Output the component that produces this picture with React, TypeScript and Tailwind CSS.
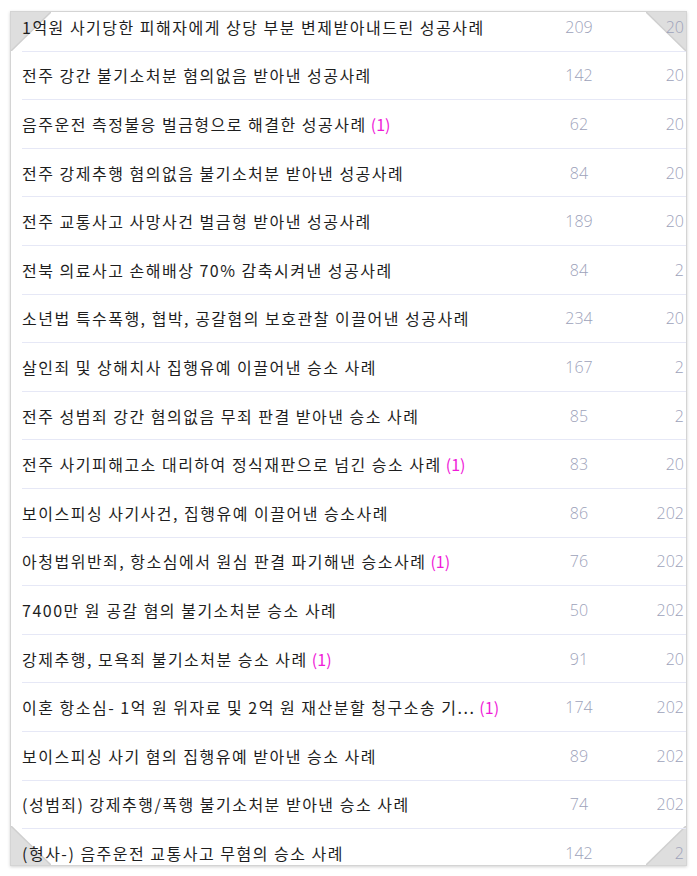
import { FC } from 'react';

interface Row {
  title: string;
  comments?: number;
  views: number;
  date: string;
}

const rows: Row[] = [
  { title: '1억원 사기당한 피해자에게 상당 부분 변제받아내드린 성공사례', views: 209, date: '20' },
  { title: '전주 강간 불기소처분 혐의없음 받아낸 성공사례', views: 142, date: '20' },
  { title: '음주운전 측정불응 벌금형으로 해결한 성공사례', comments: 1, views: 62, date: '20' },
  { title: '전주 강제추행 혐의없음 불기소처분 받아낸 성공사례', views: 84, date: '20' },
  { title: '전주 교통사고 사망사건 벌금형 받아낸 성공사례', views: 189, date: '20' },
  { title: '전북 의료사고 손해배상 70% 감축시켜낸 성공사례', views: 84, date: '2' },
  { title: '소년법 특수폭행, 협박, 공갈혐의 보호관찰 이끌어낸 성공사례', views: 234, date: '20' },
  { title: '살인죄 및 상해치사 집행유예 이끌어낸 승소 사례', views: 167, date: '2' },
  { title: '전주 성범죄 강간 혐의없음 무죄 판결 받아낸 승소 사례', views: 85, date: '2' },
  { title: '전주 사기피해고소 대리하여 정식재판으로 넘긴 승소 사례', comments: 1, views: 83, date: '20' },
  { title: '보이스피싱 사기사건, 집행유예 이끌어낸 승소사례', views: 86, date: '202' },
  { title: '아청법위반죄, 항소심에서 원심 판결 파기해낸 승소사례', comments: 1, views: 76, date: '202' },
  { title: '7400만 원 공갈 혐의 불기소처분 승소 사례', views: 50, date: '202' },
  { title: '강제추행, 모욕죄 불기소처분 승소 사례', comments: 1, views: 91, date: '20' },
  { title: '이혼 항소심- 1억 원 위자료 및 2억 원 재산분할 청구소송 기...', comments: 1, views: 174, date: '202' },
  { title: '보이스피싱 사기 혐의 집행유예 받아낸 승소 사례', views: 89, date: '202' },
  { title: '(성범죄) 강제추행/폭행 불기소처분 받아낸 승소 사례', views: 74, date: '202' },
  { title: '(형사-) 음주운전 교통사고 무혐의 승소 사례', views: 142, date: '2' },
];

const Corner: FC<{ pos: 'tl' | 'tr' | 'bl' | 'br' }> = ({ pos }) => {
  const place = {
    tl: 'top-0 left-0',
    tr: 'top-0 right-0',
    bl: 'bottom-0 left-0',
    br: 'bottom-0 right-0',
  }[pos];
  const points = {
    tl: '0,0 40,0 0,39',
    tr: '0,0 40,0 40,39',
    bl: '0,0 0,39 40,39',
    br: '40,0 40,39 0,39',
  }[pos];
  const edge = {
    tl: '40,0 0,39',
    tr: '0,0 40,39',
    bl: '0,0 40,39',
    br: '40,0 0,39',
  }[pos];
  return (
    <svg className={`absolute ${place} w-[40px] h-[39px]`} viewBox="0 0 40 39">
      <polygon points={points} fill="#dedede" />
      <polyline points={edge} fill="none" stroke="#cfcfcf" strokeWidth="1.5" />
    </svg>
  );
};

export default function App() {
  return (
    <div className="min-h-[876px] bg-white pt-[11px] pl-[10px]" style={{ fontFamily: '"Noto Sans CJK KR", "Noto Sans", sans-serif' }}>
      <div className="relative w-[677px] h-[855px] border border-[#d4d4d4] bg-white shadow-[0_1px_3px_rgba(0,0,0,0.18)] overflow-hidden">
        <Corner pos="tl" />
        <Corner pos="tr" />
        <Corner pos="bl" />
        <Corner pos="br" />
        <ul className="relative -mt-[9px] pl-[11px]">
          {rows.map((row, i) => (
            <li
              key={i}
              className="flex items-center h-[48.6px] border-b border-[#e6e8f6] whitespace-nowrap"
            >
              <div className="flex-1 text-[16px] text-[#1e1e1e] tracking-[1.5px]">
                {row.title}
                {row.comments ? <span className="ml-[4px] tracking-normal text-[#f01ad8]">({row.comments})</span> : null}
              </div>
              <div className="w-[60px] text-center text-[16px] text-[#9da2ba] font-light mr-[40px]" style={{ fontFamily: '"Open Sans", sans-serif' }}>
                {row.views}
              </div>
              <div className="w-[37px] text-right pr-[2px] text-[16px] text-[#9da2ba] font-light" style={{ fontFamily: '"Open Sans", sans-serif' }}>
                {row.date}
              </div>
            </li>
          ))}
        </ul>
      </div>
    </div>
  );
}
